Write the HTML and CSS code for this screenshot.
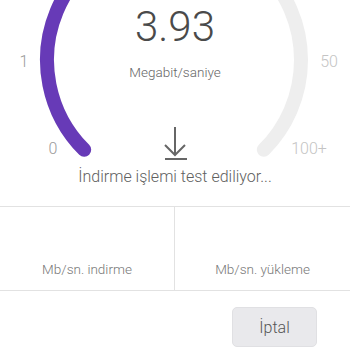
FILE: index.html
```html
<!DOCTYPE html>
<html lang="tr">
<head>
<meta charset="utf-8">
<link rel="stylesheet" href="styles.css">
</head>
<body>
<div class="app">
  <div class="gauge">
    <svg class="dial" width="350" height="167" viewBox="0 0 350 167">
      <path class="track" d="M 84.2 149.8 A 127 127 0 1 1 263.8 149.8"/>
      <path class="progress" d="M 84.2 149.8 A 127 127 0 0 1 174 -67"/>
    </svg>
    <span class="tick tick-1 passed">1</span>
    <span class="tick tick-0 passed">0</span>
    <span class="tick tick-50">50</span>
    <span class="tick tick-100">100+</span>
    <div class="center">
      <div class="value">3.93</div>
      <div class="unit">Megabit/saniye</div>
      <svg class="arrow" width="24" height="34" viewBox="0 0 24 34">
        <path d="M11 0 V28 M1 18 L11 28 L21 18 M1 32 H23"/>
      </svg>
    </div>
  </div>
  <div class="status">İndirme işlemi test ediliyor...</div>
  <div class="stats">
    <div class="cell"><span class="label">Mb/sn. indirme</span></div>
    <div class="cell"><span class="label">Mb/sn. yükleme</span></div>
  </div>
  <div class="footer">
    <button class="cancel">İptal</button>
  </div>
</div>
</body>
</html>
```
FILE: styles.css
```css
html, body {
  margin: 0;
  padding: 0;
  background: #ffffff;
}
.app {
  width: 350px;
  height: 350px;
  overflow: hidden;
  font-family: Roboto, "Noto Sans", sans-serif;
  font-weight: 300;
  color: #555555;
}
.gauge {
  position: relative;
  height: 167px;
}
.dial {
  position: absolute;
  left: 0;
  top: 0;
}
.dial path {
  fill: none;
  stroke-width: 14;
  stroke-linecap: round;
}
.track {
  stroke: #eeeeee;
}
.progress {
  stroke: #673ab7;
}
.tick {
  position: absolute;
  font-size: 16px;
  line-height: 18px;
  color: #c4c4c4;
  transform: translate(-50%, -50%);
}
.tick.passed {
  color: #9a9a9a;
}
.tick-1 { left: 24px; top: 62px; }
.tick-0 { left: 53px; top: 149px; }
.tick-50 { left: 329px; top: 62px; }
.tick-100 { left: 309px; top: 149px; }
.center {
  position: relative;
  display: flex;
  flex-direction: column;
  align-items: center;
  padding-top: 6px;
}
.value {
  font-size: 42px;
  line-height: 42px;
  font-weight: 300;
  color: #4a4a4a;
}
.unit {
  margin-top: 16px;
  font-size: 13.5px;
  line-height: 16px;
  color: #666666;
}
.arrow {
  margin-top: 47px;
  margin-left: 1px;
}
.arrow path {
  fill: none;
  stroke: #666666;
  stroke-width: 2;
}
.status {
  text-align: center;
  font-size: 16px;
  line-height: 20px;
  color: #606060;
}
.stats {
  margin-top: 19px;
  display: grid;
  grid-template-columns: 175px 175px;
  height: 85px;
  box-sizing: border-box;
  border-top: 1px solid #e2e2e2;
  border-bottom: 1px solid #e2e2e2;
}
.cell {
  display: flex;
  align-items: flex-end;
  justify-content: center;
  padding-bottom: 13px;
}
.cell:first-child {
  border-right: 1px solid #e2e2e2;
}
.label {
  font-size: 13.5px;
  line-height: 16px;
  color: #777777;
}
.footer {
  display: flex;
  justify-content: flex-end;
  padding-top: 16px;
  padding-right: 33px;
}
.cancel {
  width: 85px;
  height: 40px;
  border: 1px solid #e0e0e3;
  border-radius: 5px;
  background: #e9e9ec;
  font-family: Roboto, "Noto Sans", sans-serif;
  font-weight: 300;
  font-size: 16px;
  color: #555555;
  padding: 0;
}
```
